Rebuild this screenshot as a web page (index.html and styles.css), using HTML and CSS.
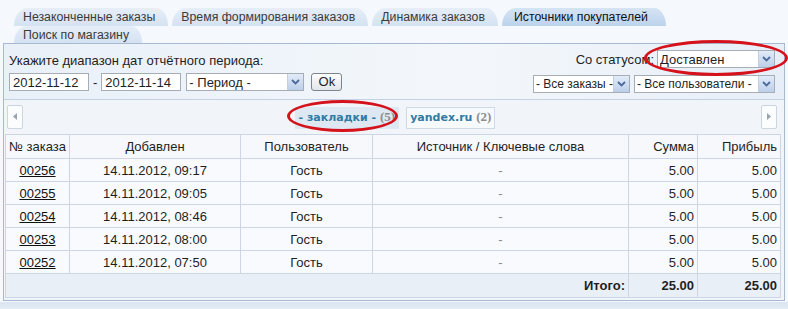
FILE: index.html
```html
<!DOCTYPE html>
<html lang="ru">
<head>
    <meta charset="UTF-8">
    <title>Источники покупателей</title>
    <link rel="stylesheet" href="styles.css">
</head>
<body>
    <div class="tabs">
        <div class="tab-row">
            <span class="tab">Незаконченные заказы</span>
            <span class="tab">Время формирования заказов</span>
            <span class="tab">Динамика заказов</span>
            <span class="tab active">Источники покупателей</span>
        </div>
        <div class="tab-row">
            <span class="tab">Поиск по магазину</span>
        </div>
    </div>

    <div class="panel">
        <div class="filters">
            <div class="filters-left">
                <div class="caption">Укажите диапазон дат отчётного периода:</div>
                <div class="row">
                    <span class="input">2012-11-12</span>
                    <span class="dash">-</span>
                    <span class="input">2012-11-14</span>
                    <div class="select period"><span class="val">- Период -</span><span class="arrow"><svg width="9" height="6" viewBox="0 0 9 6"><path d="M1 1 L4.5 4.5 L8 1" fill="none" stroke="#4a6a9a" stroke-width="1.8"/></svg></span></div>
                    <span class="btn">Ok</span>
                </div>
            </div>
            <div class="filters-right">
                <div class="row">
                    <span class="label">Со статусом:</span>
                    <div class="select status"><span class="val">Доставлен</span><span class="arrow"><svg width="9" height="6" viewBox="0 0 9 6"><path d="M1 1 L4.5 4.5 L8 1" fill="none" stroke="#4a6a9a" stroke-width="1.8"/></svg></span></div>
                </div>
                <div class="row">
                    <div class="select orders"><span class="val">- Все заказы -</span><span class="arrow"><svg width="9" height="6" viewBox="0 0 9 6"><path d="M1 1 L4.5 4.5 L8 1" fill="none" stroke="#4a6a9a" stroke-width="1.8"/></svg></span></div>
                    <div class="select users"><span class="val">- Все пользователи -</span><span class="arrow"><svg width="9" height="6" viewBox="0 0 9 6"><path d="M1 1 L4.5 4.5 L8 1" fill="none" stroke="#4a6a9a" stroke-width="1.8"/></svg></span></div>
                </div>
            </div>
        </div>

        <div class="sources">
            <span class="nav-btn"><svg width="4" height="7" viewBox="0 0 4 7"><path d="M4 0 L0 3.5 L4 7 Z" fill="#9aa3ad"/></svg></span>
            <div class="source-list">
                <span class="source current">- закладки - <em>(5)</em></span>
                <span class="source">yandex.ru <em>(2)</em></span>
            </div>
            <span class="nav-btn"><svg width="4" height="7" viewBox="0 0 4 7"><path d="M0 0 L4 3.5 L0 7 Z" fill="#9aa3ad"/></svg></span>
        </div>

        <table class="orders-table">
            <tr>
                <th class="c-num">№ заказа</th>
                <th>Добавлен</th>
                <th>Пользователь</th>
                <th>Источник / Ключевые слова</th>
                <th class="r">Сумма</th>
                <th class="r">Прибыль</th>
            </tr>
            <tr>
                <td class="c-num"><a href="#">00256</a></td><td>14.11.2012, 09:17</td><td>Гость</td><td class="muted">-</td><td class="r">5.00</td><td class="r">5.00</td>
            </tr>
            <tr>
                <td class="c-num"><a href="#">00255</a></td><td>14.11.2012, 09:05</td><td>Гость</td><td class="muted">-</td><td class="r">5.00</td><td class="r">5.00</td>
            </tr>
            <tr>
                <td class="c-num"><a href="#">00254</a></td><td>14.11.2012, 08:46</td><td>Гость</td><td class="muted">-</td><td class="r">5.00</td><td class="r">5.00</td>
            </tr>
            <tr>
                <td class="c-num"><a href="#">00253</a></td><td>14.11.2012, 08:00</td><td>Гость</td><td class="muted">-</td><td class="r">5.00</td><td class="r">5.00</td>
            </tr>
            <tr>
                <td class="c-num"><a href="#">00252</a></td><td>14.11.2012, 07:50</td><td>Гость</td><td class="muted">-</td><td class="r">5.00</td><td class="r">5.00</td>
            </tr>
            <tr class="total">
                <td colspan="4" class="r">Итого:</td><td class="r">25.00</td><td class="r">25.00</td>
            </tr>
        </table>
    </div>
    <div class="bottom-strip"></div>

    <!-- red marks drawn over the screenshot -->
    <span class="mark mark-status"></span>
    <span class="mark mark-source"></span>
</body>
</html>
```

FILE: styles.css
```css
body {
    margin: 0;
    padding: 0;
    background-color: #f5f8fc;
    font-family: "Liberation Sans", Arial, sans-serif;
    font-size: 13px;
    color: #1f1f1f;
    position: relative;
    width: 788px;
    height: 309px;
    overflow: hidden;
}

.tabs {
    padding: 8px 0 0 14px;
    font-size: 12.3px;
}

.tab-row {
    display: flex;
    gap: 4px;
    height: 18px;
}

.tab-row + .tab-row {
    height: 17px;
}

.tab {
    display: inline-block;
    padding: 1px 13px 0 9px;
    line-height: 16px;
    color: #3a3a3a;
    background: linear-gradient(to bottom, #e6eef8, #d4e2f1);
    border-radius: 14px 12px 0 0 / 18px 18px 0 0;
}

.tab.active {
    padding-left: 12px;
    padding-right: 18px;
    background: linear-gradient(to bottom, #d5e4f4, #bcd3ec);
    color: #111;
}

.panel {
    margin: 0 3px;
    border: 1px solid #a7b9d2;
    background-color: #f1f5fa;
}

.filters {
    display: flex;
    justify-content: space-between;
    padding: 5px 9px 6px 5px;
    background: linear-gradient(to right, #e9f0f8, #f3f7fb 60%, #e7eef7);
    border-bottom: 1px solid #c4d1e2;
    height: 44px;
}

.caption {
    margin-top: 4px;
    height: 18px;
}

.row {
    display: flex;
    align-items: center;
    gap: 4px;
    height: 18px;
}

.filters-left .row {
    margin-top: 2px;
}

.filters-right .row + .row {
    margin-top: 7px;
}

.filters-right {
    display: flex;
    flex-direction: column;
    align-items: flex-end;
    padding-top: 1px;
}

.input {
    box-sizing: border-box;
    width: 80px;
    height: 18px;
    padding: 1px 3px;
    line-height: 15px;
    background: #fff;
    border: 1px solid #a7adb7;
}

.select {
    box-sizing: border-box;
    display: flex;
    align-items: center;
    justify-content: space-between;
    height: 18px;
    padding-left: 2px;
    background: #fff;
    border: 1px solid #a7adb7;
    line-height: 15px;
    white-space: nowrap;
}

.select .val {
    overflow: hidden;
}

.select .arrow {
    flex-shrink: 0;
    display: flex;
    align-items: center;
    justify-content: center;
    width: 15px;
    height: 16px;
    background: linear-gradient(to bottom, #e2ebf8, #bccfea);
    border-left: 1px solid #c3cfe0;
}

.period { width: 118px; margin-left: 1px; }
.status { width: 118px; }
.orders { width: 97px; font-size: 12px; }
.users { width: 141px; font-size: 12px; }

.label {
    margin-right: -1px;
}

.btn {
    box-sizing: border-box;
    height: 18px;
    width: 31px;
    margin-left: 3px;
    text-align: center;
    line-height: 15px;
    border: 1px solid #7d8590;
    border-radius: 3px;
    background: linear-gradient(to bottom, #fdfdfd, #e3e6ea);
}

.sources {
    display: flex;
    align-items: center;
    justify-content: space-between;
    padding: 4px 7px 5px 3px;
}

.nav-btn {
    box-sizing: border-box;
    display: flex;
    align-items: center;
    justify-content: center;
    width: 16px;
    height: 24px;
    background: #fbfcfe;
    border: 1px solid #cdd5df;
    border-radius: 2px;
}

.source-list {
    display: flex;
    gap: 7px;
    margin-left: 6px;
    margin-top: 3px;
}

.source {
    padding: 2px 3px 3px;
    line-height: 14px;
    font-weight: bold;
    color: #2f7ba4;
    border: 1px solid #cfdae6;
    background: #f7fafd;
    font-family: "DejaVu Sans", Verdana, sans-serif;
    font-size: 11px;
}

.source.current {
    background: #dde8f3;
    border-color: #dde8f3;
}

.source em {
    font-style: normal;
    font-weight: bold;
    color: #8c8c8c;
    font-family: "Liberation Serif", serif;
    font-size: 13px;
}

.orders-table {
    width: 776px;
    margin: 0 0 2px 1px;
    border-collapse: collapse;
    background: #f8fafd;
}

.orders-table th,
.orders-table td {
    border: 1px solid #cdd6e4;
    height: 22px;
    padding: 0 3px;
    text-align: center;
    font-weight: normal;
    white-space: nowrap;
}

.orders-table th {
    height: 23px;
    background: #f6f8fc;
}

.orders-table th:nth-child(2) { width: 164px; }
.orders-table th:nth-child(3) { width: 125px; }
.orders-table th:nth-child(4) { width: 249px; }
.orders-table th:nth-child(5) { width: 62px; }

.orders-table .c-num {
    width: 52px;
}

.orders-table .r {
    text-align: right;
}

.orders-table a {
    color: #111;
}

.orders-table .muted {
    color: #8a8a8a;
}

.total td {
    height: 23px;
    font-weight: bold;
    background: #e9eff7;
}

.bottom-strip {
    height: 10px;
    margin: 1px 0 0;
    background: linear-gradient(to bottom, #dae5f1, #e8eef6);
}

.mark {
    position: absolute;
    border: 3px solid #d5121c;
    border-radius: 50%;
}

.mark-status {
    left: 644px;
    top: 40px;
    width: 138px;
    height: 30px;
}

.mark-source {
    left: 287px;
    top: 100px;
    width: 105px;
    height: 26px;
}
```
